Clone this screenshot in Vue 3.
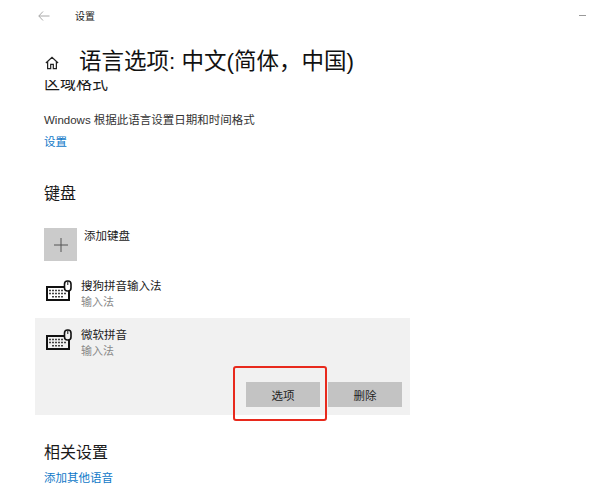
<template>
  <div class="settings">
    <header class="topbar">
      <svg class="back" width="12" height="10" viewBox="0 0 12 10">
        <path d="M5 .5 .8 5 5 9.500M.8 5H11.500" fill="none" stroke="#a8a8a8" stroke-width="1" />
      </svg>
      <span class="app-name">设置</span>
      <span class="minimize"></span>
    </header>

    <div class="page-title">
      <svg class="home" width="14" height="14" viewBox="0 0 16 16">
        <path d="M1 8 8 1.500 15 8M3 6.500V14.500H6.500V9.500H9.500V14.500H13V6.500" fill="none" stroke="#222" stroke-width="1.400" />
      </svg>
      <h1>语言选项: 中文(简体，中国)</h1>
    </div>

    <main class="content">
      <div class="scroll-inner">
        <h2 class="region-title">区域格式</h2>
        <p class="desc">Windows 根据此语言设置日期和时间格式</p>
        <a class="link">设置</a>

        <h2 class="section-title">键盘</h2>

        <div class="add-row">
          <div class="add-tile">
            <svg width="14" height="14" viewBox="0 0 14 14">
              <path d="M7 0V14M0 7H14" stroke="#555" stroke-width="1" />
            </svg>
          </div>
          <span class="add-label">添加键盘</span>
        </div>

        <div v-for="item in keyboards" :key="item.name" class="kb-row" :class="{ selected: item.selected }">
          <div class="kb-main">
            <svg class="kb-icon" width="27" height="21" viewBox="0 0 27 21">
              <path d="M20 7H2V20H24V10" fill="none" stroke="#111" stroke-width="2" />
              <path d="M4 10.500H19M4 13.500H21M7 16.800H19" stroke="#444" stroke-width="1.600" stroke-dasharray="2 1" fill="none" />
              <rect x="19.500" y="1" width="6.500" height="10" rx="3" :fill="item.selected ? '#f1f1f1' : '#fff'" stroke="#111" stroke-width="1.600" />
              <path d="M22.800 1.500V5" stroke="#111" stroke-width="1" />
            </svg>
            <div>
              <div class="kb-name">{{ item.name }}</div>
              <div class="kb-type">输入法</div>
            </div>
          </div>
          <div v-if="item.selected" class="kb-actions">
            <button type="button" class="action highlighted">选项</button>
            <button type="button" class="action">删除</button>
          </div>
        </div>

        <h2 class="related-title">相关设置</h2>
        <a class="link more">添加其他语音</a>
      </div>
    </main>
  </div>
</template>

<script setup>
const keyboards = [
  { name: "搜狗拼音输入法", selected: false },
  { name: "微软拼音", selected: true },
];
</script>

<style>
html,
body {
  margin: 0;
  background: #fff;
}
</style>

<style scoped>
.settings {
  position: relative;
  width: 599px;
  height: 496px;
  overflow: hidden;
  background: #fff;
  color: #1a1a1a;
  font-family: "Liberation Sans", "Noto Sans CJK SC", sans-serif;
}

.topbar {
  display: flex;
  align-items: center;
  height: 31px;
  padding-left: 38px;
}

.app-name {
  margin-left: 25px;
  font-size: 10px;
  color: #222;
}

.minimize {
  margin-left: auto;
  margin-right: 13px;
  width: 7px;
  height: 1px;
  background: #999;
}

.page-title {
  display: flex;
  align-items: center;
  height: 49px;
  padding-top: 15px;
  padding-left: 45px;
  box-sizing: border-box;
}

.home {
  margin-top: -1px;
}

h1 {
  margin: 0 0 2px 20px;
  font-size: 22.500px;
  font-weight: 400;
  line-height: 32px;
  white-space: nowrap;
  color: #111;
}

.content {
  height: 416px;
  overflow: hidden;
}

.scroll-inner {
  margin-top: -8px;
  padding-left: 44px;
}

h2 {
  margin: 0;
  font-weight: 400;
  color: #1a1a1a;
}

.region-title {
  font-size: 16px;
  line-height: 24px;
}

.desc {
  margin: 15px 0 0;
  font-size: 11.500px;
  line-height: 18px;
  color: #333;
}

.link {
  display: block;
  font-size: 11.500px;
  line-height: 18px;
  color: #0f78c8;
}

.desc + .link {
  margin-top: 4px;
}

.section-title {
  margin-top: 31px;
  font-size: 16px;
  line-height: 24px;
}

.add-row {
  display: flex;
  margin-top: 22px;
  height: 33px;
}

.add-tile {
  display: grid;
  place-items: center;
  width: 33px;
  height: 33px;
  background: #cbcbcb;
}

.add-label {
  margin-left: 7px;
  font-size: 11.500px;
  line-height: 16px;
  color: #222;
}

.kb-row {
  margin-left: -9px;
  width: 375px;
  padding-left: 10px;
  box-sizing: border-box;
}

.add-row + .kb-row {
  margin-top: 17px;
  height: 40px;
}

.kb-row.selected {
  height: 97px;
  background: #f1f1f1;
}

.kb-main {
  display: flex;
  align-items: flex-start;
}

.selected .kb-main {
  padding-top: 9px;
}

.kb-icon {
  margin-top: 2px;
  flex-shrink: 0;
}

.kb-main > div {
  margin-left: 9px;
}

.kb-name {
  font-size: 11.500px;
  line-height: 17px;
  color: #222;
}

.kb-type {
  font-size: 11px;
  line-height: 15px;
  color: #888;
}

.kb-actions {
  display: flex;
  justify-content: flex-end;
  gap: 8px;
  margin-top: 23px;
  padding-right: 8px;
}

.action {
  position: relative;
  width: 74px;
  height: 25px;
  padding: 0;
  border: none;
  background: #c3c3c3;
  color: #222;
  font-family: inherit;
  font-size: 11.500px;
}

.highlighted::after {
  content: "";
  position: absolute;
  left: -13px;
  top: -16px;
  width: 94px;
  height: 55px;
  border: 2.500px solid #e8291c;
  border-radius: 3px;
  box-sizing: border-box;
}

.related-title {
  margin-top: 26px;
  font-size: 16px;
  line-height: 24px;
}

.more {
  margin-top: 4px;
}
</style>
